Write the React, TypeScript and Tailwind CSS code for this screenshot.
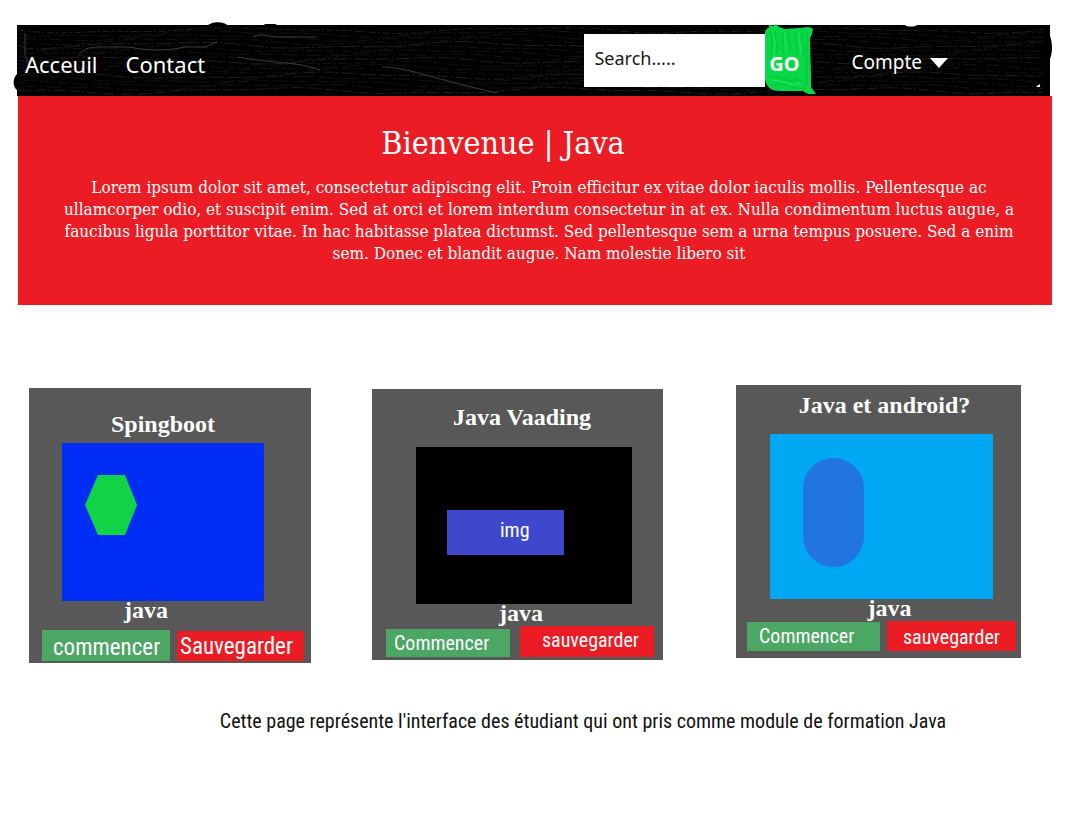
import React from "react";

const sans = "font-['Noto_Sans',sans-serif]";
const slab = "font-['Roboto_Slab','DejaVu_Serif_Condensed','DejaVu_Serif',serif]";
const display = "font-['Liberation_Serif',serif]";
const narrow = "font-['Roboto_Condensed','Liberation_Sans_Narrow',Roboto,sans-serif]";

const grain = Array.from({ length: 17 }, (_, row) => {
  const base = 5 + row * 3.8;
  let d = `M2 ${base}`;
  for (let x = 10; x <= 1032; x += 8) {
    const y =
      base +
      Math.sin(x / 47 + row * 0.35) * 2.6 +
      Math.sin(x / 19 + row * 1.7) * 1.1;
    d += ` L${x} ${Math.min(69, Math.max(3, y)).toFixed(1)}`;
  }
  return { d, dash: `${7 + ((row * 5) % 11)} ${2 + (row % 4)} 2 3`, tone: row % 4 === 0 ? "#363636" : "#202020" };
});

function BarTexture() {
  return (
    <svg
      aria-hidden="true"
      viewBox="0 0 1033 71"
      preserveAspectRatio="none"
      className="pointer-events-none absolute inset-0 h-full w-full overflow-visible"
    >
      <path
        d="M0 49 C-4 53 -5 61 0 65Z M190 1 C193 -3 207 -5 211 1Z M246 1 L248 -1 H259 L260 1Z M1032 8 C1036 18 1036 28 1032 36Z"
        fill="#000"
      />
      {grain.map((g, i) => (
        <path key={i} d={g.d} fill="none" stroke={g.tone} strokeWidth="0.6" strokeDasharray={g.dash} />
      ))}
      <path
        d="M8 8 V30 L12 40 M62 30 C66 24 72 22 82 22 H112 C130 26 150 26 168 22 H188 L200 17 M236 12 C245 7 252 12 260 12 H300 M220 32 C250 38 280 36 303 45 M365 42 C390 42 420 55 480 68"
        fill="none"
        stroke="#4a4a4a"
        strokeWidth="0.8"
      />
      <path d="M888 0 H900 C898 2 890 2 888 0Z M1020 61 L1023 59 V62 H1019Z" fill="#fff" />
    </svg>
  );
}

function GoShape() {
  return (
    <svg
      aria-hidden="true"
      viewBox="0 0 52 71"
      preserveAspectRatio="none"
      className="absolute inset-0 h-full w-full overflow-visible"
    >
      <path
        d="M0 9 C0 5 2 3 4 3 L4 0 L8 1 L11 -1 L14 2 L20 4 L34 3 L44 2 L48 4 L47 9 L45 13 L46 50 L46 62 L51 69 L43 69 L38 66 L15 66 C6 66 1 62 0 54Z"
        fill="#09d846"
      />
      <path
        d="M5 6 C10 20 4 30 8 44 M11 5 C7 15 15 20 11 29 M17 7 C23 13 14 20 19 29 M24 8 C20 16 29 21 24 29 M31 6 C27 14 35 20 31 30 M38 7 C34 17 42 20 38 31 M42 8 V60 M5 52 C14 48 22 60 32 54 L42 60 M9 60 C18 55 28 66 40 63"
        fill="none"
        stroke="#05b838"
        strokeWidth="0.8"
      />
      <path
        d="M8 9 C13 19 6 28 9 38 M21 7 C17 14 23 20 21 27 M35 8 C31 15 38 22 35 30 M7 56 C16 53 24 63 36 58"
        fill="none"
        stroke="#35ea6c"
        strokeWidth="0.8"
      />
    </svg>
  );
}

type Course = {
  title: string;
  card: string;
  heading: string;
  media: string;
  art: React.ReactNode;
  label: string;
  actions: string;
  start: string;
  startClass: string;
  save: string;
  saveClass: string;
};

const courses: Course[] = [
  {
    title: "Spingboot",
    card: "mt-[3px] flex-[282] pb-[2px]",
    heading: "pt-5 pr-[14px] pb-[3px]",
    media: "mr-[47px] ml-[33px] h-[158px] bg-[#002ef5] pt-8 pl-[23px]",
    art: (
      <svg aria-hidden="true" viewBox="0 0 52 60" className="h-[60px] w-[52px]">
        <path d="M13 0H40L52 30L40 60H13L0 30Z" fill="#12d245" />
      </svg>
    ),
    label: "pr-12",
    actions: "mt-[7px] mr-[7px] ml-[13px] grid-cols-[128fr_127fr] gap-[7px]",
    start: "commencer",
    startClass: "h-[31px] pt-1 pl-[11px] text-[23px]",
    save: "Sauvegarder",
    saveClass: "h-[30px] pt-[2px] pl-[3px] text-[23px]",
  },
  {
    title: "Java Vaading",
    card: "mt-1 ml-[61px] flex-[291] pb-[3px]",
    heading: "pt-3 pl-[9px] pb-[14px]",
    media: "mr-[31px] ml-[44px] h-[157px] bg-black pt-[63px] pl-[31px]",
    art: (
      <div className={`h-[45px] w-[117px] bg-[#3f48cc] pt-[6px] pl-[53px] text-xl text-white ${narrow}`}>
        img
      </div>
    ),
    label: "pl-[7px]",
    actions: "mr-[9px] ml-[14px] grid-cols-[124fr_134fr] gap-[10px]",
    start: "Commencer",
    startClass: "h-[28px] pl-2 text-xl",
    save: "sauvegarder",
    saveClass: "h-[31px] pl-[22px] text-xl",
  },
  {
    title: "Java et android?",
    card: "ml-[73px] flex-[285] pb-[7px]",
    heading: "pt-1 pl-3 pb-[13px]",
    media: "mr-[28px] ml-[34px] h-[165px] bg-[#00a8f3] pt-6 pl-[33px]",
    art: <div className="h-[109px] w-[61px] rounded-full bg-[#2175e0]" />,
    label: "pl-[22px]",
    actions: "mr-[5px] ml-[11px] grid-cols-[133fr_129fr] gap-[7px]",
    start: "Commencer",
    startClass: "h-[29px] pl-3 text-xl",
    save: "sauvegarder",
    saveClass: "h-[30px] pt-[2px] pl-4 text-xl",
  },
];

function CourseCard({ course }: { course: Course }) {
  return (
    <article className={`min-w-0 bg-[#585858] text-white ${course.card}`}>
      <h2 className={`text-center text-2xl font-bold ${display} ${course.heading}`}>{course.title}</h2>
      <div className={course.media}>{course.art}</div>
      <p className={`relative -mt-1 text-center text-2xl leading-[26px] font-bold ${display} ${course.label}`}>java</p>
      <div className={`grid items-end ${narrow} ${course.actions}`}>
        <button type="button" className={`flex bg-[#4ca664] leading-7 ${course.startClass}`}>
          {course.start}
        </button>
        <button type="button" className={`flex bg-[#ec1c24] leading-7 ${course.saveClass}`}>
          {course.save}
        </button>
      </div>
    </article>
  );
}

export default function App() {
  return (
    <div className="min-h-screen bg-white pt-[25px] pb-16">
      <header className={`relative mr-[30px] ml-[17px] flex h-[71px] bg-black text-white ${sans}`}>
        <BarTexture />
        <nav className="relative flex grow gap-7 pt-[23px] pl-2 text-[22px] leading-8">
          <a href="#accueil">Acceuil</a>
          <a href="#contact">Contact</a>
        </nav>
        <form className="relative flex" onSubmit={(e) => e.preventDefault()}>
          <input
            type="text"
            aria-label="Search"
            placeholder="Search....."
            className="mt-[9px] h-[53px] w-[181px] bg-white pb-[6px] pl-[10px] text-lg text-black outline-none placeholder:text-[#1a1a1a]"
          />
          <button type="submit" className="relative h-[71px] w-[52px] pt-[6px] pr-[14px] text-xl font-bold">
            <GoShape />
            <span className="relative">GO</span>
          </button>
        </form>
        <button type="button" className="relative mr-[102px] ml-[34px] flex items-center gap-2 pt-1 text-[19px]">
          Compte
          <svg aria-hidden="true" viewBox="0 0 18 10" className="h-[10px] w-[18px]">
            <path d="M0 0H18L9 10Z" fill="#fff" />
          </svg>
        </button>
      </header>

      <section className={`mr-7 ml-[18px] bg-[#ec1c24] pt-6 pr-7 pb-[41px] pl-9 text-center text-white ${slab}`}>
        <h1 className="pr-[72px] text-[32px] leading-[46px]">Bienvenue | Java</h1>
        <p className="mt-[10px] text-[17px] leading-[22px]">
          Lorem ipsum dolor sit amet, consectetur adipiscing elit. Proin efficitur ex vitae dolor iaculis mollis. Pellentesque ac
          <br />
          ullamcorper odio, et suscipit enim. Sed at orci et lorem interdum consectetur in at ex. Nulla condimentum luctus augue, a
          <br />
          faucibus ligula porttitor vitae. In hac habitasse platea dictumst. Sed pellentesque sem a urna tempus posuere. Sed a enim
          <br />
          sem. Donec et blandit augue. Nam molestie libero sit
        </p>
      </section>

      <main>
        <div className="mt-20 mr-[59px] ml-[29px] flex items-start">
          {courses.map((course) => (
            <CourseCard key={course.title} course={course} />
          ))}
        </div>
        <p className={`mt-11 pl-[86px] text-center text-xl text-[#111] ${narrow}`}>
          Cette page représente l'interface des étudiant qui ont pris comme module de formation Java
        </p>
      </main>
    </div>
  );
}
